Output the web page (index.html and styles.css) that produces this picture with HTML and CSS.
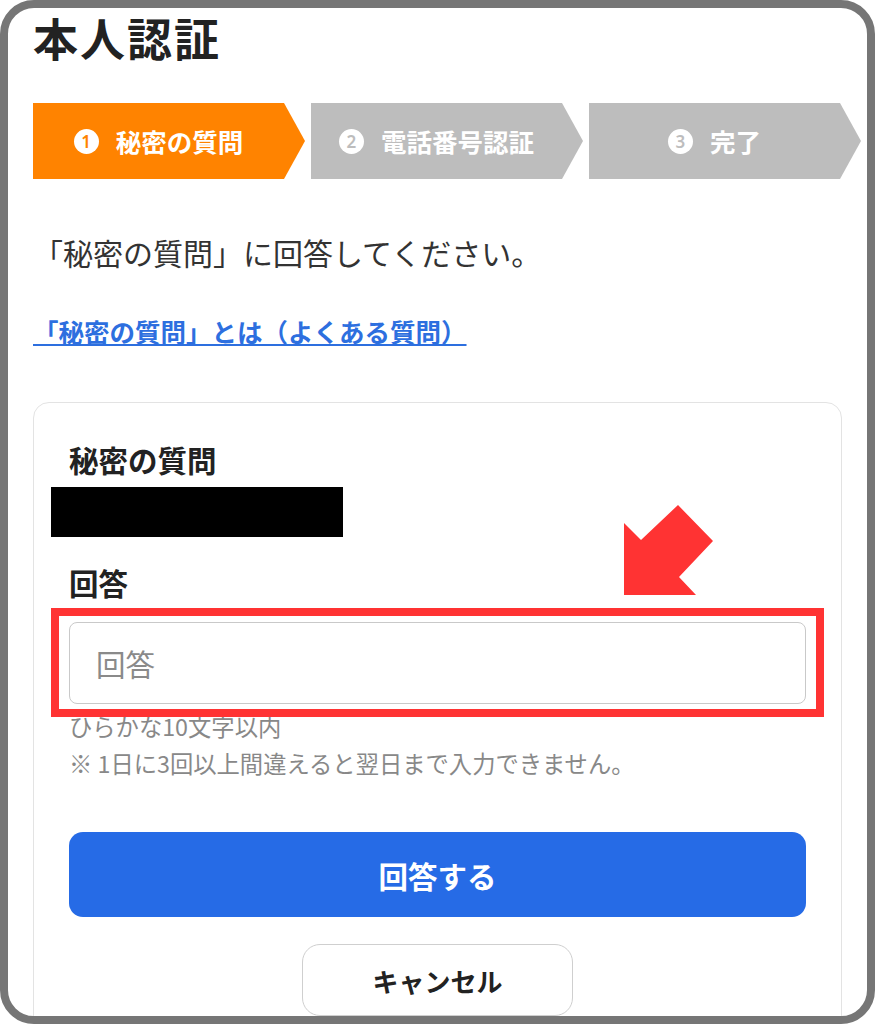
FILE: index.html
```
<!DOCTYPE html>
<html lang="ja">
<head>
<meta charset="utf-8">
<title>本人認証</title>
<link rel="stylesheet" href="styles.css">
</head>
<body>
<div class="frame">
  <div class="page">
    <h1 class="title">本人認証</h1>
    <ol class="steps">
      <li class="step step--active"><span class="step-num">1</span><span class="step-label">秘密の質問</span></li>
      <li class="step"><span class="step-num">2</span><span class="step-label">電話番号認証</span></li>
      <li class="step"><span class="step-num">3</span><span class="step-label">完了</span></li>
    </ol>
    <p class="lead">「秘密の質問」に回答してください。</p>
    <p class="faq"><a class="faq-link" href="#">「秘密の質問」とは（よくある質問）</a></p>
    <section class="card">
      <svg class="pointer-arrow" width="90" height="91" viewBox="0 0 90 91" aria-hidden="true">
        <polygon points="0,18 17,35 54,0 89,36 55,72 72,90 0,90" fill="#ff3333"/>
      </svg>
      <h2 class="field-label">秘密の質問</h2>
      <div class="redacted"></div>
      <label class="field-label field-label--answer" for="answer">回答</label>
      <div class="answer-field">
        <input id="answer" class="answer-input" type="text" placeholder="回答">
        <span class="highlight"></span>
      </div>
      <p class="hint">ひらかな10文字以内</p>
      <p class="hint hint--note">※ 1日に3回以上間違えると翌日まで入力できません。</p>
      <button class="btn btn-primary" type="button">回答する</button>
      <button class="btn btn-cancel" type="button">キャンセル</button>
    </section>
  </div>
</div>
</body>
</html>
```
FILE: styles.css
```
body {
  margin: 0;
  background: #fff;
  font-family: "Noto Sans CJK JP", "Noto Sans", sans-serif;
  color: #333;
}

.frame {
  width: 875px;
  height: 1024px;
  box-sizing: border-box;
  border: 8px solid #767676;
  border-radius: 34px;
  overflow: hidden;
  background: #fff;
}

.page {
  padding: 7px 25px 0;
}

.title {
  margin: 0;
  font-size: 45px;
  line-height: 1;
  font-weight: 700;
  letter-spacing: 2px;
  color: #222;
}

.steps {
  list-style: none;
  margin: 43px 0 0;
  padding: 0;
  display: flex;
  gap: 6px;
  width: 828px;
}

.step {
  flex: 0 0 272px;
  height: 76px;
  box-sizing: border-box;
  padding-right: 21px;
  background: #bdbdbd;
  clip-path: polygon(0 0, 251px 0, 272px 50%, 251px 100%, 0 100%);
  display: flex;
  align-items: center;
  justify-content: center;
  color: #fff;
}

.step--active {
  background: #ff8300;
}

.step-num {
  flex: 0 0 25px;
  width: 25px;
  height: 25px;
  border-radius: 50%;
  background: #fff;
  color: #bdbdbd;
  font-family: "Noto Sans", sans-serif;
  font-size: 17px;
  font-weight: 600;
  line-height: 1;
  display: flex;
  align-items: center;
  justify-content: center;
  margin-right: 17px;
}

.step--active .step-num {
  color: #ff8300;
}

.step-label {
  font-size: 25.5px;
  font-weight: 700;
  line-height: 1;
}

.lead {
  margin: 58px 0 0;
  font-size: 30px;
  line-height: 1;
  color: #333;
}

.faq {
  margin: 51px 0 0;
  font-size: 25.5px;
  line-height: 1;
  font-weight: 700;
}

.faq-link {
  color: #2d6fdf;
  text-decoration: underline;
  text-decoration-thickness: 2px;
  text-underline-offset: 2px;
}

.card {
  position: relative;
  margin-top: 58px;
  border: 1.5px solid #e3e3e3;
  border-radius: 16px;
  padding: 42px 35px 80px;
}

.pointer-arrow {
  position: absolute;
  left: 589.5px;
  top: 102.5px;
}

.field-label {
  display: block;
  margin: 0;
  font-size: 29.5px;
  font-weight: 700;
  line-height: 1;
  color: #222;
}

.redacted {
  margin: 13px 0 0 -18px;
  width: 292px;
  height: 50px;
  background: #000;
}

.field-label--answer {
  margin-top: 31px;
}

.answer-field {
  position: relative;
  margin-top: 24px;
}

.answer-input {
  display: block;
  width: 100%;
  height: 82px;
  box-sizing: border-box;
  border: 1.5px solid #c9c9c9;
  border-radius: 8px;
  padding: 0 26px;
  font-family: inherit;
  font-size: 29.5px;
  color: #333;
  background: #fff;
  outline: none;
}

.answer-input::placeholder {
  color: #8a8a8a;
}

.highlight {
  position: absolute;
  left: -18px;
  right: -18px;
  top: -14px;
  bottom: -13px;
  border: 8px solid #ff3333;
  pointer-events: none;
}

.hint {
  margin: 11px 0 0;
  font-size: 23.3px;
  line-height: 1;
  color: #888;
}

.hint--note {
  margin-top: 14.4px;
}

.btn {
  display: flex;
  align-items: center;
  justify-content: center;
  font-family: inherit;
  font-weight: 700;
  cursor: pointer;
}

.btn-primary {
  margin-top: 57px;
  width: 100%;
  height: 85px;
  border: 0;
  border-radius: 14px;
  background: #266be6;
  color: #fff;
  font-size: 29.5px;
}

.btn-cancel {
  margin: 27px auto 0;
  width: 271px;
  height: 72px;
  border: 1.5px solid #cfcfcf;
  border-radius: 18px;
  background: #fff;
  color: #222;
  font-size: 26px;
}
```
